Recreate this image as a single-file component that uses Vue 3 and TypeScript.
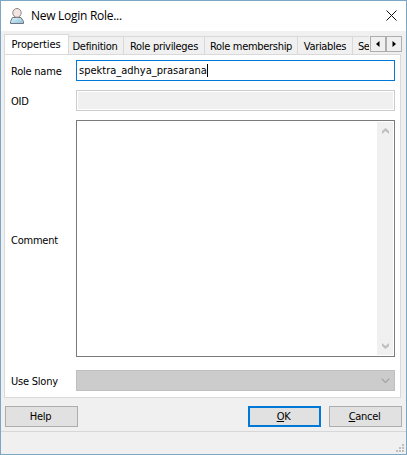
<script setup lang="ts">
import { ref } from 'vue'

interface Tab { label: string; cls: string }

const tabs: Tab[] = [
  { label: 'Properties', cls: 'properties' },
  { label: 'Definition', cls: 'definition' },
  { label: 'Role privileges', cls: 'privileges' },
  { label: 'Role membership', cls: 'membership' },
  { label: 'Variables', cls: 'variables' },
  { label: 'Se', cls: 'security' },
]
const active = ref('Properties')
const roleName = ref('spektra_adhya_prasarana')
</script>

<template>
  <div class="window">
    <header class="titlebar">
      <svg class="user" width="16" height="18" viewBox="0 0 16 18">
        <defs>
          <linearGradient id="shirt" x1="0" y1="0" x2="1" y2="1">
            <stop offset="0" stop-color="#e4f4fa" />
            <stop offset="1" stop-color="#86bfdc" />
          </linearGradient>
        </defs>
        <path d="M1.500 16.500V14.500L3.500 10.500H12L14.500 14.500V16.500Z" fill="url(#shirt)" stroke="#6f777c" />
        <ellipse cx="8" cy="5.900" rx="4.200" ry="4.400" fill="#f3e6e2" stroke="#8c8583" />
      </svg>
      <span class="title">New Login Role...</span>
      <svg class="close" width="11" height="11" viewBox="0 0 11 11">
        <path d="M0.500 0.500L10.500 10.500M10.500 0.500L0.500 10.500" stroke="#111" stroke-width="1" fill="none" />
      </svg>
    </header>

    <main class="content">
      <div class="tabrow">
        <nav class="tabs">
          <div
            v-for="t in tabs"
            :key="t.label"
            class="tab"
            :class="[t.cls, { active: active === t.label }]"
            @click="active = t.label"
          ><span>{{ t.label }}</span></div>
        </nav>
        <div class="scroller">
          <button class="spin"><svg width="4" height="6" viewBox="0 0 4 6"><path d="M3.500 0V6L0 3Z" /></svg></button>
          <button class="spin"><svg width="4" height="6" viewBox="0 0 4 6"><path d="M0.500 0V6L4 3Z" /></svg></button>
        </div>
      </div>

      <section class="page">
        <label>Role name</label>
        <div class="field focused"><span class="value">{{ roleName }}</span><i class="caret"></i></div>
        <label>OID</label>
        <div class="field disabled"></div>
        <label class="l-comment">Comment</label>
        <div class="comment">
          <div class="scrollbar">
            <svg width="7" height="6" viewBox="0 0 7 6"><path d="M0 6V3L3.500 0L7 3V6L3.500 3Z" /></svg>
            <svg width="7" height="6" viewBox="0 0 7 6"><path d="M0 0V3L3.500 6L7 3V0L3.500 3Z" /></svg>
          </div>
        </div>
        <label>Use Slony</label>
        <div class="combo">
          <svg width="9" height="6" viewBox="0 0 9 6"><path d="M0.700 0.800L4.500 4.500L8.300 0.800" /></svg>
        </div>
      </section>

      <div class="buttons">
        <button class="btn help"><span>Help</span></button>
        <button class="btn primary"><span><u>O</u>K</span></button>
        <button class="btn cancel"><span><u>C</u>ancel</span></button>
      </div>
    </main>

    <footer class="status">
      <svg width="8" height="8" viewBox="0 0 8 8">
        <path d="M6 0h2v2h-2zM3 3h2v2h-2zM6 3h2v2h-2zM0 6h2v2h-2zM3 6h2v2h-2zM6 6h2v2h-2z" />
      </svg>
    </footer>
  </div>
</template>

<style>
body { margin: 0; background: #fff; }
</style>

<style scoped>
* { box-sizing: border-box; }
.window {
  width: 407px;
  height: 455px;
  border: 1px solid #7ba7c4;
  background: #f0f0f0;
  display: flex;
  flex-direction: column;
  overflow: hidden;
  color: #000;
  font-family: "DejaVu Sans Condensed", "DejaVu Sans", sans-serif;
  font-stretch: condensed;
  font-size: 11px;
  line-height: 14px;
  letter-spacing: -0.3px;
  white-space: nowrap;
}
svg { display: block; flex: none; }
.titlebar {
  flex: none;
  height: 30px;
  background: #fff;
  display: flex;
  align-items: center;
  padding: 0 9px 0 8px;
}
.user { margin-top: -1px; }
.close { margin-top: -1px; }
.title {
  flex: 1;
  margin-left: 6px;
  font-family: "Open Sans", "Noto Sans", sans-serif;
  font-stretch: normal;
  font-size: 12px;
  letter-spacing: -0.28px;
}
.content { flex: 1; padding: 3px 4px 0 3px; }
.tabrow { display: flex; height: 20px; }
.tabs { width: 365px; display: flex; align-items: flex-end; overflow: hidden; }
.tab {
  flex: none;
  height: 18px;
  border: 1px solid #d9d9d9;
  border-width: 1px 1px 0 0;
  padding-top: 3px;
  display: flex;
  justify-content: center;
}
.tab.active {
  height: 21px;
  border-left-width: 1px;
  background: #fff;
  padding-top: 3px;
  margin-bottom: -1px;
}
.properties { width: 65px; letter-spacing: -0.1px; padding-right: 1px; }
.definition { width: 55px; padding-right: 2px; }
.privileges { width: 81px; }
.membership { width: 93px; }
.variables { width: 55px; }
.security { width: 16px; justify-content: flex-start; padding-left: 5px; letter-spacing: -0.5px; border-right: 0; }
.scroller { display: flex; padding-top: 2px; margin-left: 1px; }
.spin {
  width: 16px;
  height: 16px;
  padding: 0;
  border: 1px solid #adadad;
  background: #f0f0f0;
  display: grid;
  place-items: center;
}
.spin svg { fill: #000; }
.page {
  width: 397px;
  height: 344px;
  background: #fff;
  border: 1px solid #d9d9d9;
  padding: 5px 5px 0 6px;
  display: grid;
  grid-template-columns: 65px 319px;
  grid-template-rows: 21px 21px 241px 21px;
  row-gap: 9px;
  align-items: center;
}
.page label { padding-top: 2px; letter-spacing: -0.22px; }
.page .l-comment { padding-top: 1px; }
.field, .combo { height: 21px; border: 1px solid #ccc; }
.field { display: flex; align-items: center; padding: 0 2px; background: #fff; }
.value { letter-spacing: 0; }
.focused { border-color: #0078d7; }
.disabled { background: #f0f0f0; box-shadow: inset 0 0 0 1px #fff; }
.caret { width: 1px; height: 13px; background: #000; }
.comment {
  height: 237px;
  align-self: start;
  border: 1px solid #7a7a7a;
  padding: 1px;
  display: flex;
  justify-content: flex-end;
}
.scrollbar {
  width: 16px;
  background: #f0f0f0;
  display: flex;
  flex-direction: column;
  justify-content: space-between;
  align-items: center;
  padding: 6px 0;
}
.scrollbar svg { fill: #bfbfbf; }
.combo {
  background: #ccc;
  border-color: #bfbfbf;
  display: flex;
  justify-content: flex-end;
  align-items: center;
  padding-right: 4px;
}
.combo svg { fill: none; stroke: #a3a3a3; stroke-width: 1.2; }
.buttons { display: flex; padding: 8px 0 0 1px; }
.btn {
  width: 73px;
  height: 21px;
  padding: 1px 0 0;
  border: 1px solid #adadad;
  background: #e1e1e1;
  color: #000;
  font: inherit;
  letter-spacing: inherit;
  display: grid;
  place-items: center;
}
.btn + .btn { margin-left: 8px; }
.btn.help, .btn.cancel, .btn.primary { padding-right: 2px; }
.btn.primary { margin-left: auto; border: 2px solid #0078d7; }
u { text-decoration: underline; text-underline-offset: 1px; text-decoration-thickness: 1px; }
.status {
  flex: none;
  height: 23px;
  border-top: 1px solid #d7d7d7;
  display: flex;
  justify-content: flex-end;
  align-items: flex-end;
  padding: 0 2px 2px;
}
.status svg { fill: #bfbfbf; }
</style>
